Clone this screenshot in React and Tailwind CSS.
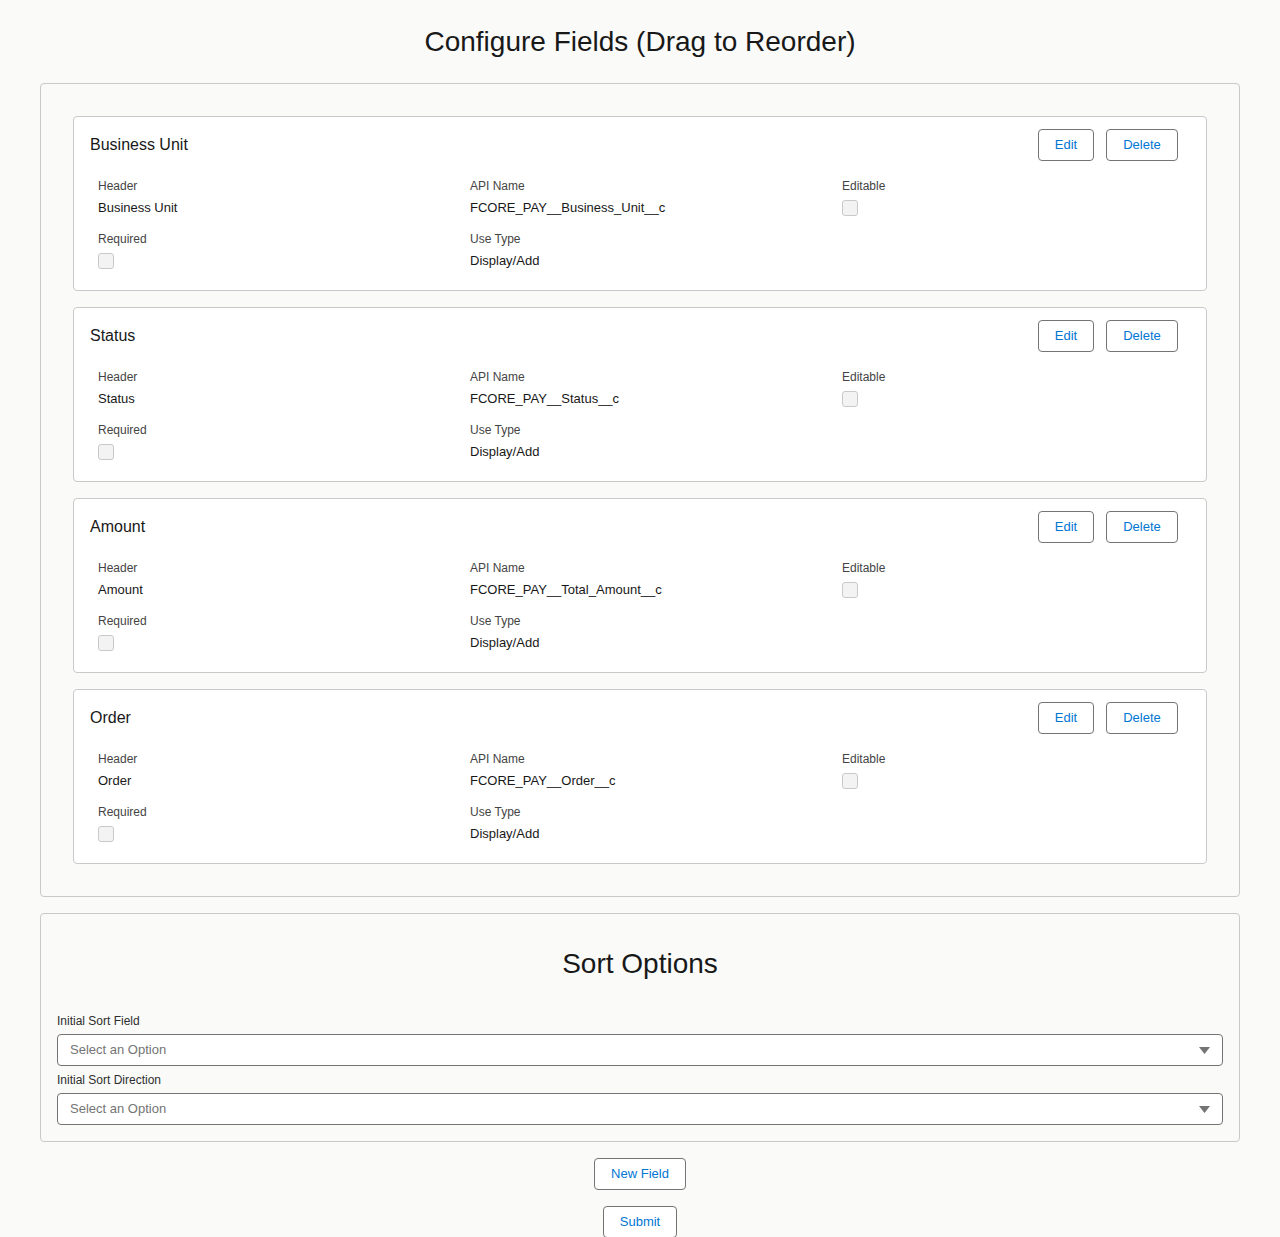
const fields = [
  { t: "Business Unit", api: "FCORE_PAY__Business_Unit__c" },
  { t: "Status", api: "FCORE_PAY__Status__c" },
  { t: "Amount", api: "FCORE_PAY__Total_Amount__c" },
  { t: "Order", api: "FCORE_PAY__Order__c" },
];
const Btn = ({ children, cls = "" }) => (
  <button className={"h-8 rounded border border-[#747474] bg-white text-[13px] text-[#0176d3] " + cls}>{children}</button>
);
const Box = () => <div className="w-4 h-4 rounded-[3px] border border-[#c9c9c9] bg-[#f3f3f3]" />;
function Card({ f }) {
  return (
    <div className="bg-white border border-[#c9c9c9] rounded pt-3 pb-5">
      <div className="flex items-center pl-4 pr-7">
        <div className="text-[16px] text-[#181818] flex-1">{f.t}</div>
        <Btn cls="w-14">Edit</Btn>
        <Btn cls="w-[72px] ml-3">Delete</Btn>
      </div>
      <div className="grid grid-cols-[372px_372px_1fr] pl-6 mt-4 gap-y-[12px]">
        <div><div className="text-[12px] text-[#444]">Header</div><div className="text-[13px] text-[#181818] mt-[3px]">{f.t}</div></div>
        <div><div className="text-[12px] text-[#444]">API Name</div><div className="text-[13px] text-[#181818] mt-[3px]">{f.api}</div></div>
        <div><div className="text-[12px] text-[#444]">Editable</div><div className="mt-[5px]"><Box /></div></div>
        <div><div className="text-[12px] text-[#444]">Required</div><div className="mt-[5px]"><Box /></div></div>
        <div><div className="text-[12px] text-[#444]">Use Type</div><div className="text-[13px] text-[#181818] mt-[3px]">Display/Add</div></div>
      </div>
    </div>
  );
}
const Sel = ({ label }) => (
  <div>
    <div className="text-[12px] text-[#2e2e2e] mb-[4px]">{label}</div>
    <div className="h-8 bg-white border border-[#747474] rounded flex items-center px-3 justify-between">
      <span className="text-[13px] text-[#747474]">Select an Option</span>
      <svg width="11" height="7" viewBox="0 0 11 7"><path d="M0 0h11L5.5 7z" fill="#747474" /></svg>
    </div>
  </div>
);
export default function App() {
  return (
    <div className="min-h-[1237px] bg-[#fafaf9] px-10 pt-6" style={{ fontFamily: '"Liberation Sans", Arial, sans-serif' }}>
      <h1 className="text-center text-[28px] text-[#181818] leading-9">Configure Fields (Drag to Reorder)</h1>
      <div className="mt-[23px] border border-[#c9c9c9] rounded p-8 flex flex-col gap-4">
        {fields.map((f) => <Card key={f.t} f={f} />)}
      </div>
      <div className="mt-4 border border-[#c9c9c9] rounded px-4 pb-4 pt-8">
        <h2 className="text-center text-[28px] text-[#181818] leading-9">Sort Options</h2>
        <div className="mt-[30px] flex flex-col gap-[5px]">
          <Sel label="Initial Sort Field" />
          <Sel label="Initial Sort Direction" />
        </div>
      </div>
      <div className="flex flex-col items-center gap-4 mt-4">
        <Btn cls="w-[92px]">New Field</Btn>
        <Btn cls="w-[74px]">Submit</Btn>
      </div>
    </div>
  );
}
